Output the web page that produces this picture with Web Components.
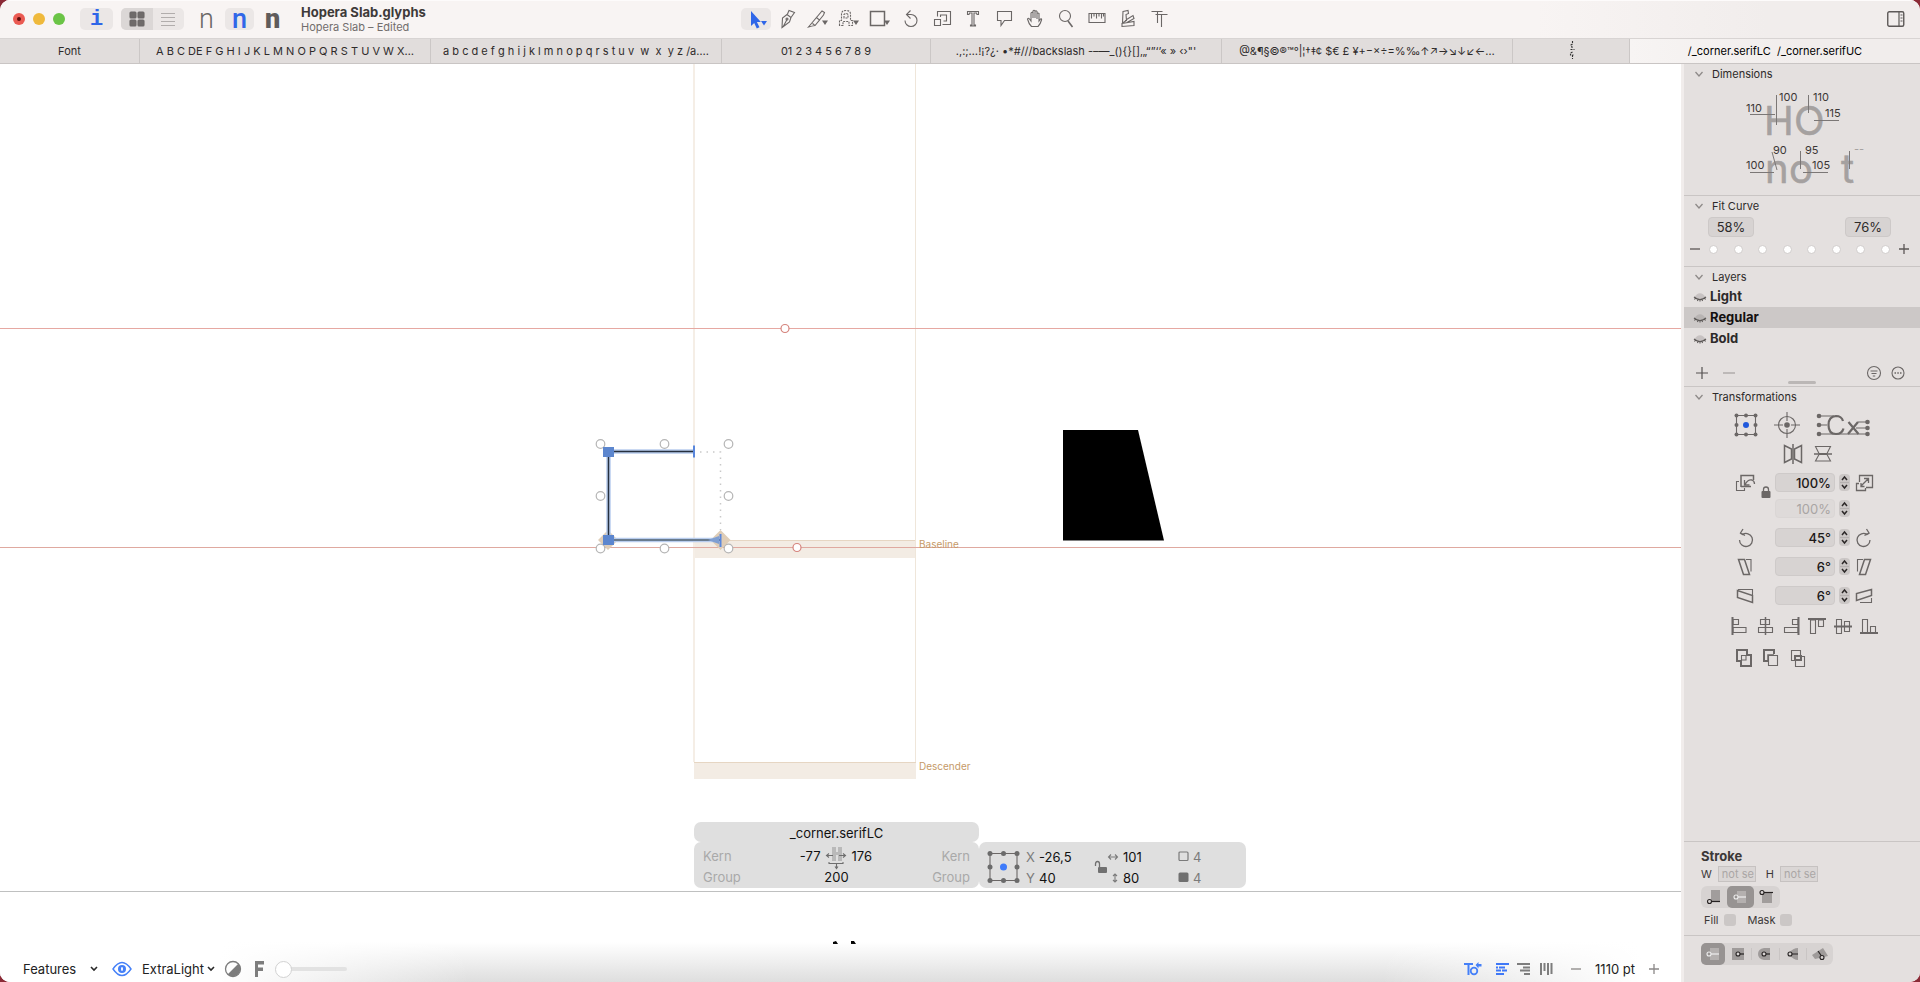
<!DOCTYPE html>
<html lang="en">
<head>
<meta charset="utf-8">
<title>Hopera Slab.glyphs</title>
<style>
  html, body { margin: 0; background: #8b2a36; }
  body { font: 12px/16px Inter, "Noto Sans", sans-serif; color: #2d2a2a; }
</style>
</head>
<body>
<glyphs-window></glyphs-window>

<script>
const ICONS = {
  grid4: [18, 18, '<g fill="#6f6b6a"><rect x="2" y="2" width="6" height="6" rx="1"/><rect x="10" y="2" width="6" height="6" rx="1"/><rect x="2" y="10" width="6" height="6" rx="1"/><rect x="10" y="10" width="6" height="6" rx="1"/></g>'],
  list: [16, 16, '<path d="M1 2.5h14M1 6.5h14M1 10.5h14M1 14.5h14" stroke="#b1adac"/>'],
  cursor: [24, 22, '<path d="M7 3v15l3.200-3 2.600 5.500 2.700-1.200-2.600-5.300h4z" fill="#2f66e8" stroke="none"/><path d="M17 13h6l-3 4.500z" fill="#2f66e8" stroke="none"/>'],
  pen: [20, 22, '<path d="M5 19.500 5.500 10 10 6.500 14 9.500 12.500 14zM6 19l4-7.500M10.500 6l1.500-3.500 5.500 2-3.500 5"/><circle cx="10" cy="11" r="1"/>'],
  knife: [24, 22, '<path d="M2.500 19 10.500 9.500 13.500 12 9 17.500Q6 18 2.500 19zM10.500 9.500 16 3l2.500 1.500-1 2.500-4 5M6.500 15.500l2 1.500"/><path d="M16 12.500h6l-3 4.500z" fill="#6b6766" stroke="none"/>'],
  dotA: [24, 22, '<path d="M2.500 17.500v-5h2V6q0-3.500 4.500-3.500T13.500 6v6.500h2v5h-3.500v-4H6v4zM7 10V6.500q2-2 4 0V10z" stroke-dasharray="2 1"/><path d="M16 12.500h6l-3 4.500z" fill="#6b6766" stroke="none"/>'],
  rect: [24, 22, '<path d="M2.500 3.500h14v14h-14z" stroke-width="1.500"/><path d="M16 12.500h6l-3 4.500z" fill="#6b6766" stroke="none"/>'],
  rotate: [20, 22, '<path d="M4 12.500a6 6 0 1 0 6-6H5.500M9.500 2.500l-4 4 4 4"/>'],
  scale: [20, 22, '<path d="M5.500 8.500v-5h13v13h-8M2.500 11.500h6v6h-6zM8.500 9V7h6v6h-3"/>'],
  text: [20, 22, '<path d="M4.500 3.500h11v3h-1.500l-.500-1.500H11v12h1.500v1h-5v-1H9V5H6.500L6 6.500H4.500z"/>'],
  bubble: [20, 22, '<path d="M3.500 3.500h14v9h-7l-3.500 5v-5H3.500z"/>'],
  hand: [20, 22, '<path d="M6.500 18.500C4 16 3 13 2.500 11q1-1.500 2 0l1.500 2V5q1.200-1.500 2 0v5-7q1-1.500 2 0v7-6.500q1-1.500 2 0V11V5.500q1-1 2 0V13l1.500-2q1.500-.500 1 1-1 4-3.500 6.500z"/>'],
  zoom: [20, 22, '<circle cx="9" cy="8" r="5.500"/><path d="m12 13 4.500 6" stroke-width="1.500"/>'],
  ruler: [20, 22, '<path d="M2 5.500h16v9H2zM4.500 5.500v5M7 5.500v3M9.500 5.500v5M12 5.500v3M14.500 5.500v5M16.500 5.500v3" />'],
  annotate: [20, 22, '<path d="M5 3.500l5-1 .500 3-2.500 1 .500 6-4 2.500zM4 15.500l12-2v4l-12 1zM7 12.500l8-5 1 3-7 4"/>'],
  tt: [20, 22, '<path d="M2.500 3.500h11M6.500 6.500h12M8.500 4v11M12.500 7v12"/>'],
  sidebar: [18, 16, '<rect x=".750" y=".750" width="16" height="14.500" rx="1.500" stroke="#5d5958" stroke-width="1.400"/><path d="M12 1v14" stroke="#5d5958" stroke-width="1.200"/><path d="M13.500 4h2M13.500 7h2M13.500 10h2" stroke="#5d5958"/>'],
  bits: [8, 20, '<path d="M5.500 0v3l-1.500 1 1 2v2M3.500 8.500h4M5.500 11l-2 1v2h3M5.500 14v4" stroke="#333" stroke-dasharray="2 1"/>'],
  chev: [10, 6, '<path d="m1.500 1 3.500 4L8.500 1" stroke="#8e8a89" stroke-width="1.300"/>'],
  chevd: [8, 6, '<path d="m1 1 3 3 3-3" stroke="#2a2a2a" stroke-width="1.600"/>'],
  eyeShut: [14, 10, '<path d="M1 5.500Q7-3 13 5.500 7 10 1 5.500z" fill="#9b9796" fill-opacity=".4" stroke="none"/><path d="M1 5q6 5 12 0M2.500 6 1.500 7.500M5 7.300l-.500 1.700M7 7.500v2M9 7.300l.500 1.700M11.500 6l1 1.500" stroke="#5c5857"/>'],
  plus: [14, 14, '<path d="M7 1v12M1 7h12" stroke="#545050" stroke-width="1.200"/>'],
  minus: [14, 14, '<path d="M1 7h12" stroke="#545050" stroke-width="1.200"/>'],
  plusS: [10, 10, '<path d="M5 0v10M0 5h10" stroke="#5b5756" stroke-width="1.300"/>'],
  minusS: [10, 10, '<path d="M0 5h10" stroke="#5b5756" stroke-width="1.300"/>'],
  filter: [16, 16, '<circle cx="8" cy="8" r="6.500"/><path d="M4.500 6h7M5.500 8.500h5M6.800 11h2.400" stroke-width="1.200"/>'],
  more: [16, 16, '<circle cx="8" cy="8" r="6"/><path d="M4.500 8h1.500M7.300 8h1.500M10 8h1.500" stroke-width="1.500"/>'],
  box9: [24, 24, '<path d="M2.500 2.500h19v19h-19z"/><g fill="#6b6766" stroke="none"><circle cx="2.500" cy="2.500" r="2"/><circle cx="12" cy="2.500" r="2"/><circle cx="21.500" cy="2.500" r="2"/><circle cx="2.500" cy="12" r="2"/><circle cx="21.500" cy="12" r="2"/><circle cx="2.500" cy="21.500" r="2"/><circle cx="12" cy="21.500" r="2"/><circle cx="21.500" cy="21.500" r="2"/></g><circle cx="12" cy="12" r="3" fill="#2159dc" stroke="none"/>'],
  box9b: [32, 32, '<path d="M2 2.500h27v27H2z"/><g fill="#6b6b6b" stroke="none"><circle cx="2" cy="2.500" r="2.500"/><circle cx="15.500" cy="2.500" r="2.500"/><circle cx="29" cy="2.500" r="2.500"/><circle cx="2" cy="16" r="2.500"/><circle cx="29" cy="16" r="2.500"/><circle cx="2" cy="29.500" r="2.500"/><circle cx="15.500" cy="29.500" r="2.500"/><circle cx="29" cy="29.500" r="2.500"/></g><circle cx="15.500" cy="16" r="3.500" fill="#3e7bfa" stroke="none"/>'],
  cross: [28, 28, '<circle cx="14" cy="14" r="8.500"/><path d="M14 1v9M14 18v9M1 14h9M18 14h9"/><circle cx="14" cy="14" r="2.800" fill="#6b6766" stroke="none"/>'],
  cx: [54, 24, '<path d="M3 3h15M3 12h8M3 21h49M40 15h12M42 9h10"/><g fill="#6b6766" stroke="none"><circle cx="3" cy="3" r="2.300"/><circle cx="3" cy="12" r="2.300"/><circle cx="3" cy="21" r="2.300"/><circle cx="51.500" cy="9" r="2.300"/><circle cx="51.500" cy="15" r="2.300"/><circle cx="51.500" cy="21" r="2.300"/></g><path d="M27 8Q25.500 3 20 3 12.500 3.500 12.500 12 12.500 21 20 21 26 21 27.500 15.500M32.500 9l10 12M42 9l-10 12" stroke-width="2.200"/>'],
  flipH: [20, 22, '<path d="M1.500 2.500v17l7-3.500V6zM18.500 2.500v17l-7-3.500V6z" stroke-width="1.500"/><path d="M10 1v20" stroke-width="1.500"/>'],
  flipV: [20, 18, '<path d="M2.500 1.500h15L14 8.500H6zM6 9.500h8l3.500 6.500h-15z"/><path d="M1 9h18" stroke-width="1.500"/>'],
  shrink: [20, 18, '<path d="M6 13V1.500h12.500V6M6 12.500h10" stroke-width="1.500"/><path d="M4 7.500H1.500v9h8V14"/><path d="M9.500 6v5h5M10 10.500q3-5.500 7-4.500 2.500 1 2.500 4" stroke-width="1.300"/>'],
  grow: [20, 18, '<path d="M5.500 8V1.500h13v12H12M5 9.500H2.500v7h9V14M7 12l7-7M10 4.500h4.500V9M7 9v3.500h3.500" stroke-width="1.300"/>'],
  lock: [10, 12, '<rect x=".5" y="5" width="9" height="7" rx="1" fill="#6b6766" stroke="none"/><path d="M2.500 6V3.500a2.500 2.500 0 0 1 5 0V6" stroke-width="1.300"/>'],
  unlock: [14, 14, '<rect x="4" y="7" width="9" height="6" rx="1" fill="#707070" stroke="none"/><path d="M1.500 6V4q0-2.500 2-2.500T5.500 4v3" stroke="#707070" stroke-width="1.300"/>'],
  step: [11, 17, '<rect width="11" height="17" rx="4" fill="#cbc7c6" stroke="none"/><path d="M1 8.500h9" stroke="#b5b1b0"/><path d="m3 6 2.500-3L8 6M3 11l2.500 3L8 11" stroke="#2d2929" stroke-width="1.500"/>'],
  rotL: [20, 20, '<path d="M4.500 12a6.500 6.500 0 1 0 3-5.500L5 5M8 1 5.500 5l4.500 2.500" stroke-width="1.300"/>'],
  rotR: [20, 20, '<path d="M16 12a6.500 6.500 0 1 1-3-5.500L15.500 5M12.500 1 15 5l-4.500 2.500" stroke-width="1.300"/>'],
  slantL: [20, 18, '<path d="M3.500 1.500h6l5 15h-6z" stroke-width="1.500"/><path d="M11 1.500h5v12"/>'],
  slantR: [20, 18, '<path d="M16.500 1.500h-6l-5 15h6z" stroke-width="1.500"/><path d="M9 1.500H3.500v12"/>'],
  skewL: [20, 18, '<path d="M2.500 3.500v7l15 5v-7z" stroke-width="1.500"/><path d="M3 2.500h14.500V8"/>'],
  skewR: [20, 18, '<path d="M17.500 2.500v6l-15 5v-7z" stroke-width="1.500"/><path d="M6 15.500h11.500V11"/>'],
  alL: [20, 20, '<path d="M3.500 1v18" stroke-width="2"/><path d="M4 3.500h5.500v5H4zM4 11.500h13v5H4z"/>'],
  alC: [20, 20, '<path d="M10.500 1v18" stroke-width="1.500"/><path d="M5.500 3.500h9v5h-9zM3.500 11.500h14v5h-14z"/>'],
  alR: [20, 20, '<path d="M17.500 1v18" stroke-width="2"/><path d="M11.500 3.500H17v5h-5.500zM3.500 11.500H17v5H3.500z"/>'],
  alT: [20, 20, '<path d="M1 3h18" stroke-width="2"/><path d="M3.500 4h5v13.500h-5zM11.500 4h5v6.500h-5z"/>'],
  alM: [20, 20, '<path d="M1 10.500h18" stroke-width="2"/><path d="M3.500 3.500h5v14h-5zM11.500 5.500h5v10h-5z"/>'],
  alB: [20, 20, '<path d="M1 17h18" stroke-width="2"/><path d="M3.500 3.500h5V17h-5zM11.500 10.500h5V17h-5z"/>'],
  union: [18, 20, '<path d="M2 2h10v5h4v11H6v-5H2z" stroke-width="2"/><path d="M6.500 12V7.500H11V12z"/>'],
  minusF: [18, 20, '<path d="M7 13H2V2h10v4" stroke-width="2"/><path d="M6.500 7.500h9v10h-9z"/><path d="M6 13V7h6" stroke-width="1.500"/>'],
  inter: [18, 20, '<path d="M2.500 2.500h9v10h-9zM6.500 8.500h9v10h-9z"/><path d="M6 8h6v4H6z" stroke-width="2"/>'],
  s1: [18, 16, '<path d="M6 1h9v12H6z" fill="#a19d9c" stroke="none"/><path d="M6 12.500h9" stroke="#262222" stroke-width="1.200"/><circle cx="4.500" cy="12.500" r="2" stroke="#262222" fill="#d7d3d2"/>'],
  s2: [18, 16, '<path d="M6 2h9v12H6z" fill="#b4b0af" stroke="none"/><path d="M7 8h8" stroke="#eee" stroke-width="1.200"/><circle cx="5" cy="8" r="2" stroke="#eee" fill="#979392"/>'],
  s3: [18, 16, '<path d="M4 3h10v11H4z" fill="#a19d9c" stroke="none"/><path d="M6 3.500h9" stroke="#262222" stroke-width="1.200"/><circle cx="4" cy="3.500" r="2" stroke="#262222" fill="#d7d3d2"/>'],
  e2: [18, 16, '<path d="M3 2h12v12H3z" fill="#9f9b9a" stroke="none"/><path d="M11 8h4" stroke="#262222" stroke-width="1.200"/><circle cx="9" cy="8" r="2" stroke="#262222" fill="#d7d3d2"/>'],
  e3: [18, 16, '<path d="M14 2v12H8Q2 13 2 8t6-6z" fill="#9f9b9a" stroke="none"/><path d="M10 8h4" stroke="#262222" stroke-width="1.200"/><circle cx="8" cy="8" r="2" stroke="#262222" fill="#d7d3d2"/>'],
  e4: [18, 16, '<path d="M14 2v12Q10 14 5 9V7q4-5 9-5z" fill="#9f9b9a" stroke="none"/><path d="M8 8h6" stroke="#262222" stroke-width="1.200"/><circle cx="6" cy="8" r="2" stroke="#262222" fill="#d7d3d2"/>'],
  e5: [18, 16, '<path d="m1 9 11-7 5 8-4 1-9 2z" fill="#9f9b9a" stroke="none"/><path d="m7 5 3.500 5" stroke="#262222" stroke-width="1.200"/><circle cx="11" cy="11.500" r="2" stroke="#262222" fill="#d7d3d2"/>'],
  eye: [20, 16, '<path d="M1 8q9-13 18 0-9 13-18 0z" stroke="#4580f8" stroke-width="1.400"/><circle cx="10" cy="8" r="4" fill="#4580f8" stroke="none"/><ellipse cx="10" cy="8" rx="1" ry="2" fill="#fff" stroke="none"/>'],
  half: [18, 18, '<circle cx="9" cy="9" r="7.500" stroke="#7d7d7d" stroke-width="1.300"/><path d="M14.500 3.500a7.800 7.800 0 0 1-11 11z" fill="#7d7d7d" stroke="none"/>'],
  bigF: [12, 18, '<path d="M2 1h9v3.500H5v3h5V11H5v6H2z" fill="#7d7d7d" stroke="none"/>'],
  ltr: [14, 14, '<path d="M1 2h13M1 5.500h2M4 5.500h6M1 8.500h5M7 8.500h5M1 12h8" stroke="#3f78f7" stroke-width="2"/>'],
  rtl: [14, 14, '<path d="M0 2h13M6 5.500h7M3 8.500h10M7 12h6" stroke="#7d7d7d" stroke-width="2"/>'],
  ttb: [14, 14, '<path d="M2 1v12M5.500 1v8M9 1v12M12.500 1v11" stroke="#7d7d7d" stroke-width="2"/>'],
  to: [18, 16, '<path d="M1 3h9M5.500 3v11" stroke="#4580f8" stroke-width="2"/><circle cx="11" cy="10" r="3.300" stroke="#4580f8" stroke-width="1.800"/><path d="M12.500 4l3-3v2h3v2.500h-3v2z" fill="#4580f8" stroke="none"/>'],
  hspace: [22, 24, '<path d="M6 1h4v5h2V1h4v14h-4V9h-2v6H6z" fill="#b9b9b9" stroke="none"/><path d="M.5 9.500H7M3 7.500l-2.500 2 2.500 2M19.500 9.500H13M17 7.500l2.500 2-2.500 2M3 16v1.500h14V16M10.500 18v4M9 20.500l1.500 2 1.500-2" stroke="#6e6e6e"/>'],
  wArrow: [12, 8, '<path d="M1.500 4h9M4 1.500 1.500 4 4 6.500M8 1.500 10.500 4 8 6.500" stroke="#7b7b7b"/>'],
  hArrow: [8, 10, '<path d="M4 1v8M2 3l2-2 2 2M2 7l2 2 2-2" stroke="#7b7b7b"/>'],
  sqO: [11, 11, '<rect x="1" y="1" width="9" height="8.500" rx="1" stroke="#7b7b7b" stroke-width="1.200"/>'],
  sqF: [11, 11, '<rect x=".5" y=".5" width="10" height="9.500" rx="1.500" fill="#707070" stroke="none"/>']
};

/* Shared base: each subclass supplies its markup and styles as one template string. */
class Part extends HTMLElement {
  constructor() {
    super();
    const t = document.createElement('template');
    t.innerHTML = `<style>
      :host, *, ::before, ::after { box-sizing: border-box; }
      button, input, select { font: inherit; color: inherit; margin: 0; padding: 0; border: 0; background: none; appearance: none; outline: 0; }
      button { display: flex; align-items: center; justify-content: center; }
    </style>` + this.constructor.html;
    this.attachShadow({ mode: 'open' }).append(t.content.cloneNode(true));
  }
}

customElements.define('g-icon', class extends HTMLElement {
  constructor() { super(); this.attachShadow({ mode: 'open' }); }
  connectedCallback() {
    const [w, h, body] = ICONS[this.getAttribute('name')];
    this.shadowRoot.innerHTML = `<style>:host{display:block;flex:none;white-space:normal}svg{display:block;overflow:visible}</style>
      <svg width="${w}" height="${h}" viewBox="0 0 ${w} ${h}" fill="none" stroke="#6b6766" stroke-width="1.1" aria-hidden="true">${body}</svg>`;
  }
});

customElements.define('title-bar', class extends Part {
  static html = `<style>
    :host { display: grid; grid-template-columns: 741px 1fr auto; align-items: center; height: 38px; padding-right: 15px;
      background: linear-gradient(to right, #f8f4f3 80%, #f1edec 92%); box-shadow: inset 0 1px #fdfbfb; }
    .left, .tools, .lights, .seg, .masters { display: flex; align-items: center; }
    .lights { gap: 8px; width: 80px; padding-left: 13px; }
    .lights button { width: 12px; height: 12px; border-radius: 50%; }
    .red { background: #ea5a52; } .red::after { content: ""; width: 4px; height: 4px; border-radius: 50%; background: #5c0d0c; }
    .yellow { background: #efb93c; } .green { background: #6bc446; }
    .pill { height: 22px; border-radius: 5px; background: #ebe7e6; }
    .info { width: 33px; font: bold 22px "Liberation Mono", monospace; color: #2f66e8; }
    .seg { margin-left: 8px; width: 63px; overflow: hidden; }
    .seg button { flex: 1; height: 22px; } .seg button:first-child { background: #dbd7d6; }
    .masters { margin-left: 6px; }
    .masters button { width: 33px; height: 22px; font: 300 27px/22px Roboto, sans-serif; color: #6b6766; }
    .masters .on { width: 29px; margin: 0 2px; font-weight: 500; color: #2f66e8; }
    .masters .bold { font-weight: 900; color: #605c5b; }
    .name { margin-left: 12px; }
    h1 { margin: 0; font: bold 13px/15px Inter, sans-serif; color: #3e3a39; }
    p { margin: 0; font: 11px/14px Inter, sans-serif; color: #716d6c; }
    .tools button { width: 31px; height: 22px; }
    .tools .on { width: 30px; background: #ebe7e6; border-radius: 5px; }
  </style>
  <div class="left">
    <div class="lights"><button class="red" aria-label="Close"></button><button class="yellow" aria-label="Minimise"></button><button class="green" aria-label="Zoom"></button></div>
    <button class="pill info">i</button>
    <div class="pill seg"><button aria-label="Grid"><g-icon name="grid4"></g-icon></button><button aria-label="List"><g-icon name="list"></g-icon></button></div>
    <div class="masters"><button>n</button><button class="pill on">n</button><button class="bold">n</button></div>
    <div class="name"><h1>Hopera Slab.glyphs</h1><p>Hopera Slab – Edited</p></div>
  </div>
  <div class="tools">
    <button class="on" aria-label="Select"><g-icon name="cursor"></g-icon></button>
    ${['pen','knife','dotA','rect','rotate','scale','text','bubble','hand','zoom','ruler','annotate','tt'].map(n => `<button aria-label="${n}"><g-icon name="${n}"></g-icon></button>`).join('')}
  </div>
  <button aria-label="Toggle sidebar"><g-icon name="sidebar"></g-icon></button>`;
});

customElements.define('edit-tab', class extends Part {
  static html = `<style>
    :host { display: block; min-width: 0; height: 24px; border-right: 1px solid #cbc7c6; background: #e1dddc; }
    :host([active]) { border: 0; background: linear-gradient(to right, #f7f4f3, #f1edec 60%); color: #000; }
    button { display: block; width: 100%; height: 24px; line-height: 22px; text-align: center; white-space: pre; overflow: hidden; }
    ::slotted(g-icon) { width: 8px; margin: 0 auto; }
  </style><button><slot></slot></button>`;
});

customElements.define('tab-strip', class extends Part {
  static html = `<style>
    :host { display: grid; grid-template-columns: 140fr 291fr 291fr 209fr 291fr 291fr 117fr 290fr; grid-template-rows: 24px; height: 26px;
      border-top: 1px solid #d8d4d3; border-bottom: 1px solid #c9c5c4; font-size: 11px; color: #2f2b2b; }
  </style>
  <edit-tab>Font</edit-tab>
  <edit-tab>A B C DE F G H I J K L M N O P Q R S T U V W X…</edit-tab>
  <edit-tab>a b c d e f g h i j k l m n o p q r s t u v  w  x  y z /a….</edit-tab>
  <edit-tab>01 2 3 4 5 6 7 8 9</edit-tab>
  <edit-tab>.,:;…!¡?¿· •*#///backslash -–—_(){}[]‚„“”‘’« » ‹›"'</edit-tab>
  <edit-tab>@&amp;¶§©®™°|¦†‡¢ $€ £ ¥+−×÷=%‰↑↗→↘↓↙←…</edit-tab>
  <edit-tab><g-icon name="bits"></g-icon></edit-tab>
  <edit-tab active>/_corner.serifLC  /_corner.serifUC</edit-tab>`;
});

customElements.define('info-box', class extends Part {
  static html = `<style>
    :host { display: grid; grid-template-columns: 285px 267px; font-size: 13px; line-height: 20px; color: #111; }
    .name, .kern, .coords { background: #dfdfdf; border-radius: 7px; }
    .name { height: 20px; line-height: 22px; text-align: center; }
    .kern, .coords { grid-row: 2; height: 46px; padding: 4px 9px; }
    .kern { display: grid; grid-template: 21px 21px / 1fr 50px 22px 50px 1fr; }
    .kern .end, .kern .l { text-align: right; } .kern .r { padding-left: 4px; } .kern .l { padding-right: 5px; }
    .dim { color: #a9a9a9; }
    .mid { grid-column: 2 / 5; text-align: center; }
    .coords { display: grid; grid-template: 21px 21px / 38px 13px 55px 13px 16px 55px 15px 1fr; align-items: center; }
    .box { grid-area: 1 / 1 / 3 / 2; } .lock { grid-area: 1 / 4 / 3 / 5; }
    .k { color: #7b7b7b; }
    .c { justify-self: start; } g-icon[name=hArrow] { justify-self: center; }
  </style>
  <div class="name">_corner.serifLC</div>
  <div class="kern">
    <span class="dim">Kern</span><span class="l">-77</span><g-icon name="hspace"></g-icon><span class="r">176</span><span class="dim end">Kern</span>
    <span class="dim">Group</span><span class="mid">200</span><span class="dim end">Group</span>
  </div>
  <div class="coords">
    <g-icon class="box" name="box9b"></g-icon><span class="k">X</span><span>-26,5</span>
    <g-icon class="lock" name="unlock"></g-icon><g-icon class="c" name="wArrow"></g-icon><span>101</span><g-icon name="sqO"></g-icon><span class="k">4</span>
    <span class="k">Y</span><span>40</span><g-icon name="hArrow"></g-icon><span>80</span><g-icon name="sqF"></g-icon><span class="k">4</span>
  </div>`;
});

const ring = (x, y) => `<circle cx="${x}" cy="${y}" r="4.300" fill="#fff" stroke="#b5b5b5" stroke-width="1.200"/>`;
customElements.define('glyph-canvas', class extends Part {
  static html = `<style>
    :host { display: grid; position: relative; background: #fff; min-width: 0; }
    svg { display: block; width: 100%; height: 100%; min-height: 918px; grid-area: 1 / 1; }
    text { font: 10px Inter, sans-serif; fill: #c59a68; }
    info-box { position: absolute; left: 694px; top: 758px; }
    ::slotted(*) { grid-area: 1 / 1; align-self: end; position: relative; }
  </style>
  <svg aria-label="Glyph outline">
    <g transform="translate(0 -64)">
      <rect x="694" y="540" width="222" height="18" fill="#f3ece4"/>
      <rect x="694" y="762" width="222" height="17" fill="#f3ece4"/>
      <path d="M694 540.500h222M694 762.500h222" stroke="#e6d6c3"/>
      <path d="M694 64v698" stroke="#f5eee6" stroke-width="2"/><path d="M915.500 64v698" stroke="#efe6da"/>
      <line x1="0" x2="100%" y1="328.500" y2="328.500" stroke="#e6a8a2"/>
      <line x1="0" x2="100%" y1="547.500" y2="547.500" stroke="#dfa9a0"/>
      <circle cx="785" cy="328.500" r="4" fill="#fff" stroke="#d5837c" stroke-width="1.200"/>
      <circle cx="797" cy="547.500" r="4" fill="#fff" stroke="#d5837c" stroke-width="1.200"/>
      <text x="919" y="548">Baseline</text>
      <text x="919" y="770">Descender</text>
      <path d="M1063 430h75l26 110.500H1063z" fill="#000"/>
      <path d="M608 530l10 10-10 10-10-10zM720.500 530l10 10-10 10-10-10z" fill="#dfcdb7"/>
      ${ring(600.5,444)}${ring(664.5,444)}${ring(728.5,444)}${ring(600.5,496)}${ring(728.5,496)}${ring(600.5,548.5)}${ring(664.5,548.5)}${ring(728.5,548.5)}
      <path d="M700 452h20.500v78" fill="none" stroke="#c9c9c9" stroke-width="1.500" stroke-dasharray="1.500 5"/>
      <path d="M694 451.500h-85.500v88.500h112" fill="none" stroke="#b9cdee" stroke-width="4.500"/>
      <path d="M694 451.500h-85.500v88.500" fill="none" stroke="#26303f" stroke-width="1.500"/>
      <path d="M609 540h111" stroke="#51606f" stroke-width="1.500"/>
      <path d="M708 540l11-4v8z" fill="#7f9fd2"/>
      <path d="M694 445.500v12M720.500 534v13" stroke="#5a87dc" stroke-width="2"/>
      <path d="M603 447h11v10h-11zM603 535h11v10h-11z" fill="#5c86ce"/>
      <line x1="0" x2="100%" y1="891.500" y2="891.500" stroke="#bfc0c0"/>
      <path d="M833 944v-2l3-1 2 3zM851 944v-3h3l2 3z" fill="#000"/>
    </g>
  </svg>
  <info-box></info-box>
  <slot></slot>`;
});

customElements.define('status-bar', class extends Part {
  static html = `<style>
    :host { display: flex; align-items: center; justify-content: space-between; height: 40px; padding: 14px 22px 0 23px; font-size: 13px; color: #222;
      background: linear-gradient(to right, #fff 220px, rgba(255,255,255,0) 470px, rgba(255,255,255,0) calc(100% - 300px), #fff calc(100% - 40px)), linear-gradient(rgba(255,255,255,0), #dedede); }
    div, label { display: flex; align-items: center; }
    .feat select { width: 67px; } .master { margin-left: 10px; } .master select { width: 65px; }
    .eye { margin-left: 14px; } .half { margin-left: 9px; } .f { margin-left: 11px; }
    input { width: 72px; height: 18px; margin-left: 10px; }
    input::-webkit-slider-runnable-track { height: 4px; border-radius: 2px; background: #e2e2e2; }
    input::-webkit-slider-thumb { appearance: none; width: 17px; height: 17px; margin-top: -6px; border-radius: 50%; background: #fff; border: 1px solid #d2d2d2; }
    .views { gap: 8px; } .views button:first-child { margin-right: 6px; }
    .zoom { margin-left: 18px; gap: 14px; } .zoom button { opacity: .7; }
  </style>
  <div>
    <label class="feat"><select aria-label="Features"><option>Features</option></select><g-icon name="chevd"></g-icon></label>
    <button class="eye" aria-label="Preview"><g-icon name="eye"></g-icon></button>
    <label class="master"><select aria-label="Instance"><option>ExtraLight</option></select><g-icon name="chevd"></g-icon></label>
    <button class="half" aria-label="Invert"><g-icon name="half"></g-icon></button>
    <button class="f" aria-label="Flip"><g-icon name="bigF"></g-icon></button>
    <input type="range" value="0" aria-label="Blur">
  </div>
  <div class="right">
    <div class="views"><button aria-label="Kerning"><g-icon name="to"></g-icon></button><button aria-label="Left to right"><g-icon name="ltr"></g-icon></button><button aria-label="Right to left"><g-icon name="rtl"></g-icon></button><button aria-label="Vertical"><g-icon name="ttb"></g-icon></button></div>
    <div class="zoom"><button aria-label="Zoom out"><g-icon name="minusS"></g-icon></button><span>1110 pt</span><button aria-label="Zoom in"><g-icon name="plusS"></g-icon></button></div>
  </div>`;
});

customElements.define('side-section', class extends Part {
  static html = `<style>
    :host { display: block; border-bottom: 1px solid #c9c5c4; }
    header { display: flex; align-items: center; gap: 8px; height: 19px; padding-left: 10px; font-size: 11px; }
  </style><header><g-icon name="chev"></g-icon><slot name="title"></slot></header><slot></slot>`;
});

customElements.define('dimension-map', class extends Part {
  static html = `<style>
    :host { display: block; height: 112px; padding-top: 1px; }
    svg { display: block; } text { font-family: Inter, sans-serif; font-size: 11px; fill: #3b3736; }
    .g { font-size: 40px; fill: #a5a1a0; }
  </style>
  <svg width="236" height="111" viewBox="0 20 236 111">
    <g stroke="#a5a1a0" stroke-width=".5"><text class="g" x="80" y="71">H</text><text class="g" x="110" y="71">O</text><text class="g" x="81" y="119">n</text><text class="g" x="105" y="119">o</text><text class="g" x="157" y="119">t</text></g>
    <path d="M66 50.500h25M92.500 31v30M124.500 31v18M130 56.500h25M66 108.500h24M88 88l5 18M116.500 87v18M119 108.500h25M165.500 87v18" fill="none" stroke="#7b7776"/>
    <text x="62" y="48">110</text><text x="95" y="37">100</text><text x="129" y="37">110</text><text x="141" y="53">115</text>
    <text x="62" y="105">100</text><text x="89" y="90">90</text><text x="121" y="90">95</text><text x="128" y="105">105</text><text x="170" y="89" style="fill:#a5a1a0">--</text>
  </svg>`;
});

customElements.define('fit-curve', class extends Part {
  static html = `<style>
    :host { display: block; height: 51px; padding-top: 2px; }
    .vals, .dots { display: flex; align-items: center; justify-content: space-between; }
    .vals { padding: 0 29px 0 24px; }
    .vals input { width: 46px; height: 20px; border-radius: 4px; border: 1px solid #cdc9c8; background: #d7d3d2; text-align: center; font-size: 13px; }
    .dots { margin-top: 7px; padding: 0 11px 0 6px; }
    .dots g-icon:first-child { margin-right: -6px; } .dots g-icon:last-child { margin-left: -6px; }
    .dots input { width: 9px; height: 9px; border-radius: 50%; background: #fff; border: 1px solid #d0cccb; }
  </style>
  <div class="vals"><input value="58%" aria-label="Minimum"><input value="76%" aria-label="Maximum"></div>
  <div class="dots"><g-icon name="minusS"></g-icon>${'<input type="radio" name="fit" aria-label="Fit">'.repeat(8)}<g-icon name="plusS"></g-icon></div>`;
});

customElements.define('layer-list', class extends Part {
  static html = `<style>
    :host { display: block; height: 100px; }
    ul { margin: 0; padding: 0; list-style: none; font: bold 13px/21px Inter, sans-serif; }
    li { display: flex; align-items: center; gap: 3px; padding-left: 9px; }
    .on { background: #ccc8c7; color: #141010; }
    .bar { display: flex; align-items: center; gap: 13px; margin-top: 16px; padding: 0 14px 0 11px; }
    .bar .dim { opacity: .45; } .bar .f { margin-left: auto; } .bar .m { margin-left: -5px; }
    .grip { width: 28px; height: 3px; margin: 0 auto; border-radius: 2px; background: #bbb7b6; }
  </style>
  <ul><li><g-icon name="eyeShut"></g-icon>Light</li><li class="on"><g-icon name="eyeShut"></g-icon>Regular</li><li><g-icon name="eyeShut"></g-icon>Bold</li></ul>
  <div class="bar"><button aria-label="Add layer"><g-icon name="plus"></g-icon></button><button class="dim" aria-label="Remove layer"><g-icon name="minus"></g-icon></button><button class="f" aria-label="Filter"><g-icon name="filter"></g-icon></button><button class="m" aria-label="More"><g-icon name="more"></g-icon></button></div>
  <div class="grip"></div>`;
});

const row = (l, v, r, extra = '') => `<button aria-label="${l}"><g-icon name="${l}"></g-icon></button>${extra || '<i></i>'}<input value="${v}" aria-label="Amount"><button aria-label="Step"><g-icon name="step"></g-icon></button><button aria-label="${r}"><g-icon name="${r}"></g-icon></button>`;
customElements.define('transform-panel', class extends Part {
  static html = `<style>
    :host { display: block; }
    .line { display: flex; align-items: center; }
    .a { height: 37px; padding-left: 50px; gap: 15px; }
    .b { height: 22px; padding-left: 99px; gap: 10px; }
    .rows { display: grid; grid-template-columns: 20px 12px 60px 11px 19px; column-gap: 4px; row-gap: 10px; grid-auto-rows: 19px; padding: 8px 0 0 51px; }
    input { height: 19px; padding-right: 3px; border: 1px solid #cecac9; border-radius: 4px; background: #d7d3d2; text-align: right; font-size: 13px; font-weight: 500; color: #1c1818; }
    input:disabled { font-weight: 400; color: #a9a5a4; background: #dedad9; border-color: #dad6d5; }
    .second { padding-top: 7px; }
    .rest { padding-top: 10px; }
    .lock { align-self: end; height: 24px; margin: 0 -2px -12px 0; }
    .align { gap: 6px; padding: 11px 0 0 45px; }
    .bool { gap: 9px; padding: 12px 0 0 51px; }
  </style>
  <div class="line a"><g-icon name="box9"></g-icon><g-icon name="cross"></g-icon><g-icon name="cx"></g-icon></div>
  <div class="line b"><g-icon name="flipH"></g-icon><g-icon name="flipV"></g-icon></div>
  <div class="rows">${row('shrink', '100%', 'grow', '<button class="lock" aria-label="Lock ratio"><g-icon name="lock"></g-icon></button>')}</div>
  <div class="rows second"><i></i><i></i><input value="100%" disabled aria-label="Height"><button aria-label="Step"><g-icon name="step"></g-icon></button></div>
  <div class="rows rest">${row('rotL', '45°', 'rotR')}${row('slantL', '6°', 'slantR')}${row('skewL', '6°', 'skewR')}</div>
  <div class="line align">${['alL','alC','alR','alT','alM','alB'].map(n => `<g-icon name="${n}"></g-icon>`).join('')}</div>
  <div class="line bool"><g-icon name="union"></g-icon><g-icon name="minusF"></g-icon><g-icon name="inter"></g-icon></div>`;
});

customElements.define('stroke-panel', class extends Part {
  static html = `<style>
    :host { display: block; margin-top: auto; border-top: 1px solid #c9c5c4; font-size: 11px; color: #3c3837; }
    .top { height: 94px; padding: 6px 17px 0; border-bottom: 1px solid #c9c5c4; }
    h2 { margin: 0; font: bold 13px/16px Inter, sans-serif; }
    .line, label, .seg { display: flex; align-items: center; }
    .line { margin-top: 2px; gap: 10px; }
    label { gap: 6px; }
    input[type=text] { width: 38px; height: 16px; padding-left: 3px; border: 1px solid #c6c2c1; background: #dad6d5; }
    input::placeholder { color: #aaa6a5; opacity: 1; }
    .seg { width: 79px; height: 22px; margin-top: 4px; border-radius: 6px; background: #d7d3d2; }
    .seg button { flex: 1; height: 22px; border-radius: 5px; } .seg .on { background: #979392; }
    .checks { margin: 6px 0 0 3px; gap: 12px; } .checks label { gap: 5px; line-height: 12px; }
    input[type=checkbox] { width: 12px; height: 12px; border-radius: 3px; background: #cbc7c6; }
    .foot { height: 46px; padding: 7px 17px; } .foot .seg { width: 132px; margin: 0; }
    .foot .seg .on { flex: 0 0 24px; }
    .foot button + button + button { border-left: 1px solid #c9c5c4; border-radius: 0; height: 12px; }
  </style>
  <div class="top">
    <h2>Stroke</h2>
    <div class="line"><label>W <input type="text" placeholder="not se"></label><label>H <input type="text" placeholder="not se"></label></div>
    <div class="seg"><button aria-label="Left"><g-icon name="s1"></g-icon></button><button class="on" aria-label="Centre"><g-icon name="s2"></g-icon></button><button aria-label="Right"><g-icon name="s3"></g-icon></button></div>
    <div class="line checks"><label>Fill <input type="checkbox"></label><label>Mask <input type="checkbox"></label></div>
  </div>
  <div class="foot"><div class="seg"><button class="on" aria-label="Butt"><g-icon name="s2"></g-icon></button><button aria-label="Square"><g-icon name="e2"></g-icon></button><button aria-label="Round"><g-icon name="e3"></g-icon></button><button aria-label="Tapered"><g-icon name="e4"></g-icon></button><button aria-label="Aligned"><g-icon name="e5"></g-icon></button></div></div>`;
});

customElements.define('side-bar', class extends Part {
  static html = `<style>
    :host { display: flex; flex-direction: column; background: #e4e0df; border-left: 3px solid #f1edec; }
    side-section:nth-of-type(4) { border: 0; }
  </style>
  <side-section><span slot="title">Dimensions</span><dimension-map></dimension-map></side-section>
  <side-section><span slot="title">Fit Curve</span><fit-curve></fit-curve></side-section>
  <side-section><span slot="title">Layers</span><layer-list></layer-list></side-section>
  <side-section><span slot="title">Transformations</span><transform-panel></transform-panel></side-section>
  <stroke-panel></stroke-panel>`;
});

customElements.define('glyphs-window', class extends Part {
  static html = `<style>
    :host { display: flex; flex-direction: column; min-height: 100vh; border-radius: 10px; overflow: hidden; background: #fff; }
    title-bar, tab-strip { flex: none; }
    main { display: grid; grid-template-columns: 1fr 239px; flex: 1; }
  </style>
  <title-bar></title-bar><tab-strip></tab-strip>
  <main><glyph-canvas><status-bar></status-bar></glyph-canvas><side-bar></side-bar></main>`;
});
</script>
</body>
</html>
